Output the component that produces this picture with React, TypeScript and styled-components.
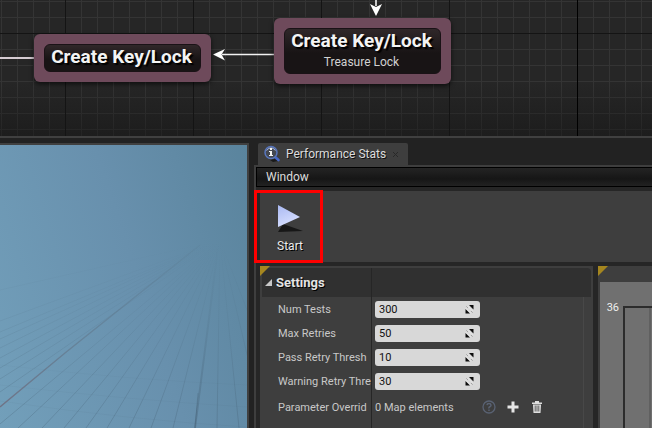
import React, { useState } from "react";
import styled, { createGlobalStyle } from "styled-components";

const GlobalStyle = createGlobalStyle`
  * { box-sizing: border-box; }
  body {
    margin: 0;
    background: #222222;
    color: #dcdcdc;
    font-family: Roboto, "Liberation Sans", sans-serif;
    font-size: 12px;
    line-height: 16px;
    overflow: hidden;
  }
  button, input { font: inherit; }
`;

const Editor = styled.main`
  display: flex;
  flex-direction: column;
  height: 100vh;
`;

/* Node graph */

const Graph = styled.section`
  position: relative;
  flex: 0 0 138px;
  overflow: hidden;
  border-bottom: 2px solid #404040;
  background-color: #262626;
  background-image:
    linear-gradient(transparent 60%, rgba(20, 20, 20, 0.5)),
    linear-gradient(90deg, #141414 1px, transparent 1px),
    linear-gradient(#141414 1px, transparent 1px),
    linear-gradient(90deg, #343434 1px, transparent 1px),
    linear-gradient(#343434 1px, transparent 1px);
  background-size: 100% 100%, 128px 128px, 128px 128px, 16px 16px, 16px 16px;
  background-position: 0 0, 65px 33px, 65px 33px, 1px 1px, 1px 1px;
`;

const AxisLine = styled.div`
  position: absolute;
  left: 577px;
  top: 0;
  bottom: 0;
  width: 1px;
  background: #000;
`;

const Wires = styled.svg`
  position: absolute;
  left: 0;
  top: 0;
`;

const Node = styled.article<{ $x: number; $y: number }>`
  position: absolute;
  left: ${(p) => p.$x}px;
  top: ${(p) => p.$y}px;
  width: 177px;
  padding: 10px;
  border-radius: 6px;
  background: #6e4a5b;
  box-shadow: 0 2px 5px rgba(0, 0, 0, 0.65);
`;

const NodeBody = styled.div`
  padding: 1px 2px 3px 0;
  border: 1px solid #1a1216;
  border-radius: 6px;
  background: linear-gradient(#302729, #181415 55%);
  text-align: center;
`;

const NodeTitle = styled.h2`
  margin: 0;
  color: #f4f4f4;
  font-size: 19px;
  font-weight: 700;
  line-height: 22px;
  white-space: nowrap;
  text-shadow: 2px 2px 1px #000;
`;

const NodeCaption = styled.p`
  margin: 0;
  padding: 2px 0 0;
  color: #d2d2d2;
`;

/* Lower dock */

const Dock = styled.div`
  display: grid;
  grid-template-columns: 249px minmax(0, 1fr);
  column-gap: 5px;
  flex: 1;
  min-height: 0;
  padding-top: 5px;
`;

const Viewport = styled.section`
  overflow: hidden;
  border: solid #404040;
  border-width: 2px 2px 0 0;
  background: linear-gradient(72deg, #729fba, #6890ad 55%, #5a849d);
`;

const StatsPanel = styled.section`
  display: flex;
  flex-direction: column;
  min-width: 0;
`;

const TabStrip = styled.div`
  display: flex;
  padding-left: 4px;
  border-bottom: 2px solid #3e3e3e;
`;

const Tab = styled.div`
  display: flex;
  align-items: center;
  width: 150px;
  height: 22px;
  padding-left: 5px;
  border-radius: 2px 2px 0 0;
  background: #3e3e3e;
  text-shadow: 1px 1px 0 #111;
`;

const TabTitle = styled.span`
  flex: 1;
  padding-left: 5px;
  white-space: nowrap;
`;

const TabClose = styled.button`
  display: flex;
  width: 20px;
  padding: 0 0 0 4px;
  border: 0;
  background: none;
`;

const PanelBody = styled.div`
  display: flex;
  flex: 1;
  flex-direction: column;
  min-height: 0;
  border-left: 2px solid #3e3e3e;
  background: #262626;
`;

const MenuBar = styled.nav`
  display: flex;
  height: 20px;
  border: solid #000;
  border-width: 1px 0 1px 1px;
  background: linear-gradient(#242424, #161616 60%, #222222);
`;

const MenuButton = styled.button`
  padding: 0 9px;
  border: 0;
  background: none;
  color: #dcdcdc;
`;

const Toolbar = styled.div`
  display: flex;
  height: 71px;
  margin: 4px 0 4px 4px;
  background: #3e3e3e;
`;

const ToolButton = styled.button`
  position: relative;
  display: flex;
  flex-direction: column;
  align-items: center;
  gap: 3px;
  width: 60px;
  padding: 12px 0 0;
  border: 0;
  background: none;
  color: #ececec;
  text-shadow: 1px 1px 0 #000;
`;

const Highlight = styled.span`
  position: absolute;
  inset: -1px -3px -1px -6px;
  border: 3px solid #ff0000;
`;

const Columns = styled.div`
  display: grid;
  grid-template-columns: minmax(0, 333px) minmax(54px, 1fr);
  column-gap: 5px;
  flex: 1;
  min-height: 0;
  padding-left: 4px;
`;

const Pane = styled.div`
  position: relative;
  display: flex;
  flex-direction: column;
  padding: 2px 2px 0;
  background: #3e3e3e;

  &::before {
    content: "";
    position: absolute;
    left: 0;
    top: 0;
    border: 5px solid;
    border-color: #a5861f transparent transparent #a5861f;
  }
`;

const SettingsGrid = styled.div`
  flex: 1;
  padding-right: 7px;
  border-radius: 0 4px 0 0;
  background:
    linear-gradient(#262626, #262626) 109px 0 / 1px 100% no-repeat,
    linear-gradient(#303030, #303030) 0 0 / 100% 29px no-repeat,
    linear-gradient(#484848, #484848) 321px 0 / 1px 100% no-repeat;
`;

const SettingsHeader = styled.button`
  display: flex;
  align-items: center;
  gap: 4px;
  height: 29px;
  padding: 0 0 0 3px;
  border: 0;
  background: none;
  color: #e4e4e4;
  font-size: 13px;
  font-weight: 700;
  text-shadow: 1px 1px 0 #000;
`;

const SettingRow = styled.div<{ $tall?: boolean }>`
  display: grid;
  grid-template-columns: 109px minmax(0, 1fr);
  column-gap: 4px;
  align-items: center;
  height: ${(p) => (p.$tall ? 28 : 24)}px;
  color: #c8c8c8;
  font-size: 11px;
`;

const SettingLabel = styled.label`
  padding: 1px 0 0 16px;
  white-space: nowrap;
`;

const NumberField = styled.span`
  display: flex;
  align-items: center;
  width: 105px;
  height: 17px;
  padding: 0 6px 0 4px;
  border-radius: 3px;
  background: #d8d8d8;
`;

const NumberInput = styled.input`
  flex: 1;
  min-width: 0;
  padding: 1px 0 0;
  border: 0;
  outline: 0;
  background: none;
  color: #111;
`;

const MapValue = styled.div`
  display: flex;
  align-items: center;
`;

const MapCount = styled.span`
  flex: 0 0 102px;
  padding-top: 1px;
`;

const IconButton = styled.button`
  display: flex;
  justify-content: center;
  width: 24px;
  padding: 0;
  border: 0;
  background: none;
`;

const Chart = styled.div`
  display: grid;
  grid-template-columns: 19px minmax(0, 1fr);
  column-gap: 4px;
  flex: 1;
  margin: 14px -2px 0 0;
  padding-top: 24px;
  background: #707070;
`;

const AxisLabel = styled.span`
  height: 0;
  color: #eeeeee;
  font-size: 11px;
  line-height: 4px;
  text-align: right;
`;

const Plot = styled.div`
  border: solid #2c2c2c;
  border-width: 2px 0 0 2px;
  background: linear-gradient(#606060, #606060) 24px 0 / 2px 100% no-repeat;
`;

const FLOOR_LINES = [
  [0, 145], [0, 176], [0, 187], [0, 194], [0, 203], [0, 213], [0, 223],
  [0, 234], [0, 247], [0, 279], [18, 283], [42, 283], [64, 283], [86, 283],
  [107, 283], [129, 283], [151, 283], [173, 283], [217, 283], [239, 283],
  [249, 218], [249, 170],
];

const FloorGrid = () => (
  <svg width="247" height="283" viewBox="0 0 247 283" aria-hidden="true">
    <defs>
      <linearGradient id="fade" gradientUnits="userSpaceOnUse" x1="0" y1="95" x2="0" y2="283">
        <stop offset="0" stopColor="#3d5568" stopOpacity="0" />
        <stop offset="0.4" stopColor="#3d5568" stopOpacity="0.1" />
        <stop offset="1" stopColor="#3d5568" stopOpacity="0.34" />
      </linearGradient>
      <linearGradient id="redFade" gradientUnits="userSpaceOnUse" x1="200" y1="100" x2="0" y2="262">
        <stop offset="0" stopColor="#506c80" stopOpacity="0.1" />
        <stop offset="0.6" stopColor="#5e7082" stopOpacity="0.5" />
        <stop offset="1" stopColor="#6f6e80" stopOpacity="0.9" />
      </linearGradient>
    </defs>
    <g stroke="url(#fade)" fill="none">
      {FLOOR_LINES.map(([x, y]) => (
        <path key={`${x}-${y}`} d={`M220 95L${x} ${y}`} strokeWidth="0.8" />
      ))}
      <path d="M0 240Q130 255 247 262M0 220Q130 235 247 240M0 256Q130 275 247 282" strokeWidth="0.2" />
      <path d="M219 95L195 283" strokeWidth="2" />
      <path d="M198 248L195 283" />
    </g>
    <path d="M200 100L65 208L0 262" stroke="url(#redFade)" strokeWidth="1.4" fill="none" />
  </svg>
);

const InfoIcon = () => (
  <svg width="18" height="18" viewBox="0 0 18 18" aria-hidden="true">
    <path d="M7 15l5-1 3 2-5 1z" fill="#191919" />
    <path d="M11.5 11.5l4 3.5" stroke="#4668c8" strokeWidth="2.6" strokeLinecap="round" />
    <circle cx="8" cy="7.5" r="6" fill="#444851" stroke="#5876bd" strokeWidth="1.5" />
    <path d="M3.7 5.5a5 5 0 0 1 8.6 0" stroke="#b9c7e8" fill="none" />
    <path d="M7 3h2v2H7zM6 6h3v4h1v1H6v-1h1V7H6z" fill="#f4f4f4" />
  </svg>
);

const PlayIcon = () => (
  <svg width="32" height="32" viewBox="0 0 32 32" aria-hidden="true">
    <defs>
      <linearGradient id="play" x1="0" y1="0" x2="0.4" y2="1">
        <stop offset="0" stopColor="#a9b8f2" />
        <stop offset="1" stopColor="#d7dfff" />
      </linearGradient>
    </defs>
    <path d="M4 29l5-8 20 7z" fill="#171717" />
    <path d="M4 2L26 14L4 24z" fill="url(#play)" />
  </svg>
);

const DragIcon = () => (
  <svg width="9" height="9" viewBox="0 0 9 9" aria-hidden="true">
    <path d="M4 0h4.500v4.500zM0.500 4v4.500H5z" fill="#0c0c0c" />
    <path d="M0.800 3.200L5.800 8.200M2.800 1.200L7.800 6.200" stroke="#f1f1f1" strokeWidth="0.7" />
    <path d="M1.500 1.500l1.200 1.200M6.300 6.300l1.200 1.200" stroke="#777" strokeWidth="0.8" />
  </svg>
);

const HelpIcon = () => (
  <svg width="14" height="14" viewBox="0 0 14 14" fill="none" stroke="#596273" aria-hidden="true">
    <circle cx="7" cy="7" r="6" strokeWidth="1.3" />
    <path d="M5 5.2Q5.2 3.5 7 3.5T9 5.2Q9 6.3 7.8 6.8T7 8.5M7 9.5v1.5" strokeWidth="1.5" />
  </svg>
);

const AddIcon = () => (
  <svg width="12" height="12" viewBox="0 0 12 12" aria-hidden="true">
    <path d="M4.5 0.500h3v4H11.500v3H7.500v4h-3v-4H0.500v-3h4z" fill="#e6e6e6" />
  </svg>
);

const TrashIcon = () => (
  <svg width="12" height="12" viewBox="0 0 12 12" aria-hidden="true">
    <path d="M1 1.500h3V0h4v1.500h3V3H1z" fill="#dedede" />
    <path d="M2 3.500h8L9.500 12h-7z" fill="#dedede" />
    <path d="M4.200 4.500v6M6 4.500v6M7.800 4.500v6" stroke="#3e3e3e" strokeWidth="0.8" />
  </svg>
);

const FIELDS = [
  { id: "num-tests", label: "Num Tests", value: "300" },
  { id: "max-retries", label: "Max Retries", value: "50" },
  { id: "pass-threshold", label: "Pass Retry Thresh", value: "10" },
  { id: "warning-threshold", label: "Warning Retry Thre", value: "30" },
];

export default function App() {
  const [values, setValues] = useState<Record<string, string>>(
    Object.fromEntries(FIELDS.map((f) => [f.id, f.value]))
  );

  return (
    <>
      <GlobalStyle />
      <Editor>
        <Graph>
          <AxisLine />
          <Wires width="460" height="136" viewBox="0 0 460 136" aria-hidden="true">
            <path d="M0 58H34" stroke="#d5cbd2" strokeWidth="2" />
            <path d="M222 54.500H274M376 0V6" stroke="#f2f2f2" strokeWidth="1.600" />
            <path d="M213 54.500L225 49L221.500 54.500L225 60.500z" fill="#fff" />
            <path d="M376 16L370 4L376 7L382 4z" fill="#fff" />
          </Wires>
          <Node $x={34} $y={34}>
            <NodeBody>
              <NodeTitle>Create Key/Lock</NodeTitle>
            </NodeBody>
          </Node>
          <Node $x={274} $y={18}>
            <NodeBody>
              <NodeTitle>Create Key/Lock</NodeTitle>
              <NodeCaption>Treasure Lock</NodeCaption>
            </NodeBody>
          </Node>
        </Graph>
        <Dock>
          <Viewport aria-label="Viewport">
            <FloorGrid />
          </Viewport>
          <StatsPanel>
            <TabStrip>
              <Tab>
                <InfoIcon />
                <TabTitle>Performance Stats</TabTitle>
                <TabClose aria-label="Close tab">
                  <svg width="7" height="7" viewBox="0 0 7 7" aria-hidden="true">
                    <path d="M1 1l5 5M6 1l-5 5" stroke="#282828" strokeWidth="1" />
                  </svg>
                </TabClose>
              </Tab>
            </TabStrip>
            <PanelBody>
              <MenuBar>
                <MenuButton>Window</MenuButton>
              </MenuBar>
              <Toolbar>
                <ToolButton>
                  <PlayIcon />
                  Start
                  <Highlight />
                </ToolButton>
              </Toolbar>
              <Columns>
                <Pane>
                  <SettingsGrid>
                    <SettingsHeader aria-expanded="true">
                      <svg width="7" height="7" viewBox="0 0 7 7" aria-hidden="true">
                        <path d="M7 0v7H0z" fill="#c8c8c8" />
                      </svg>
                      Settings
                    </SettingsHeader>
                    {FIELDS.map((field) => (
                      <SettingRow key={field.id}>
                        <SettingLabel htmlFor={field.id}>{field.label}</SettingLabel>
                        <NumberField>
                          <NumberInput
                            id={field.id}
                            inputMode="numeric"
                            value={values[field.id]}
                            onChange={(e) => setValues({ ...values, [field.id]: e.target.value })}
                          />
                          <DragIcon />
                        </NumberField>
                      </SettingRow>
                    ))}
                    <SettingRow $tall>
                      <SettingLabel as="span">Parameter Overrid</SettingLabel>
                      <MapValue>
                        <MapCount>0 Map elements</MapCount>
                        <IconButton aria-label="Help"><HelpIcon /></IconButton>
                        <IconButton aria-label="Add element"><AddIcon /></IconButton>
                        <IconButton aria-label="Delete elements"><TrashIcon /></IconButton>
                      </MapValue>
                    </SettingRow>
                  </SettingsGrid>
                </Pane>
                <Pane>
                  <Chart>
                    <AxisLabel>36</AxisLabel>
                    <Plot />
                  </Chart>
                </Pane>
              </Columns>
            </PanelBody>
          </StatsPanel>
        </Dock>
      </Editor>
    </>
  );
}
